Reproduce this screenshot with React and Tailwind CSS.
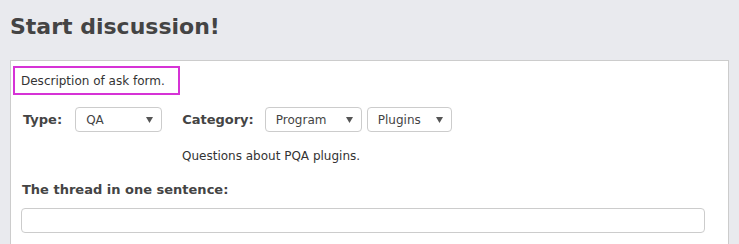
import React from "react";

const font = { fontFamily: '"DejaVu Sans", Verdana, sans-serif' };

function Select({ value, width }) {
  return (
    <div
      className="flex h-[25px] items-center justify-between rounded-[4px] border border-[#cccccc] bg-white pl-[10px] pr-[8px] text-[12px] text-[#444]"
      style={{ width }}
    >
      <span>{value}</span>
      <svg width="7" height="6" viewBox="0 0 7 6">
        <path d="M0 0 L7 0 L3.5 6 Z" fill="#555" />
      </svg>
    </div>
  );
}

export default function App() {
  return (
    <div className="min-h-screen bg-[#e9eaee] px-[10px] pt-[13px]" style={font}>
      <h1 className="mb-[19px] text-[22px] font-bold leading-[28px] text-[#444]">Start discussion!</h1>

      <div className="h-[300px] border border-[#cccccc] bg-white pt-[5px]">
        <div className="ml-[2px] flex h-[29px] w-[167px] items-center border-2 border-[#d633d6] pl-[6px] text-[12px] text-[#333]">
          Description of ask form.
        </div>

        <div className="mt-[12px] flex items-center pl-[12px] text-[13px]">
          <span className="font-bold text-[#444]">Type:</span>
          <div className="ml-[13px]">
            <Select value="QA" width="87px" />
          </div>
          <span className="ml-[20px] font-bold text-[#444]">Category:</span>
          <div className="ml-[11px] flex gap-[5px]">
            <Select value="Program" width="97px" />
            <Select value="Plugins" width="85px" />
          </div>
        </div>

        <p className="mt-[15px] pl-[171px] text-[12px] leading-[18px] text-[#333]">Questions about PQA plugins.</p>

        <div className="mt-[16px] pl-[11px] text-[13px] font-bold leading-[18px] text-[#444]">The thread in one sentence:</div>

        <div className="mt-[9px] pl-[10px]">
          <div className="h-[25px] w-[684px] rounded-[4px] border border-[#cccccc] bg-white" />
        </div>
      </div>
    </div>
  );
}
